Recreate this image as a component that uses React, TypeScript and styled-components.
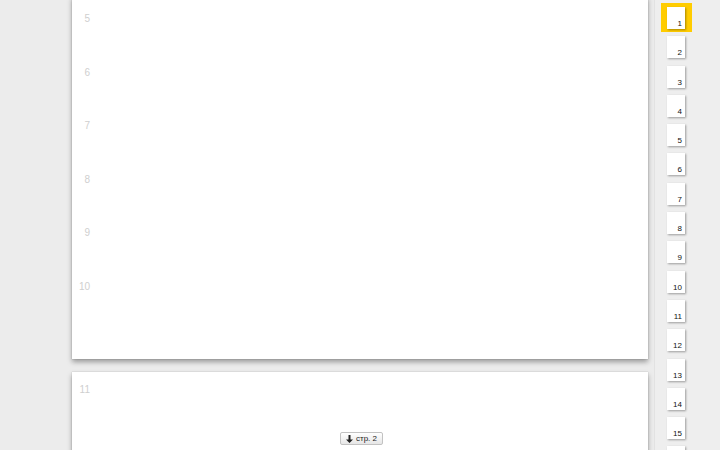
import * as React from "react"
import styled, { createGlobalStyle } from "styled-components"

const GlobalStyle = createGlobalStyle`
  html, body {
    margin: 0;
    padding: 0;
    overflow: hidden;
    background: #ececec;
    font-family: "Liberation Sans", Arial, sans-serif;
  }
`

const Viewport = styled.div`
  display: flex;
  width: 720px;
  height: 450px;
  overflow: hidden;
`

const Main = styled.div`
  position: relative;
  width: 654px;
  height: 450px;
  overflow: hidden;
  background: #ececec;
`

const PageColumn = styled.div`
  display: flex;
  flex-direction: column;
  gap: 13px;
  width: 576px;
  margin-left: 72px;
`

const Page = styled.div<{ offset: number; pageHeight: number; padTop: number }>`
  margin-top: ${({ offset }) => offset}px;
  height: ${({ pageHeight }) => pageHeight}px;
  padding-top: ${({ padTop }) => padTop}px;
  background: #fff;
  box-shadow: 0 0 1px rgba(0, 0, 0, 0.25), 0 3px 5px rgba(0, 0, 0, 0.35);
  box-sizing: border-box;
  flex-shrink: 0;
`

const LineRow = styled.div`
  height: 53.6px;
  display: flex;
`

const LineNumber = styled.span`
  width: 18px;
  text-align: right;
  font-size: 10px;
  line-height: 12px;
  color: #cfcfcf;
`

const Float = styled.div`
  position: absolute;
  left: 72px;
  width: 576px;
  bottom: 5px;
  display: flex;
  justify-content: center;
`

const PageButton = styled.button`
  display: flex;
  align-items: center;
  gap: 3px;
  height: 13px;
  padding: 0 5px 0 5px;
  margin: 0 0 0 3px;
  border: 1px solid #c2c2c2;
  border-radius: 2px;
  background: linear-gradient(#ffffff, #e6e6e6);
  font-family: "Liberation Sans", Arial, sans-serif;
  font-size: 8px;
  line-height: 9px;
  color: #222;
  cursor: pointer;
`

const Sidebar = styled.div`
  width: 66px;
  height: 450px;
  box-sizing: border-box;
  border-left: 1px solid #e2e2e2;
  background: #eeeeee;
  padding: 3px 0 0 6px;
  display: flex;
  flex-direction: column;
`

const ThumbItem = styled.div<{ active?: boolean }>`
  width: 31px;
  height: 29.3px;
  flex-shrink: 0;
  box-sizing: border-box;
  padding: 4px 0 0 6px;
  background: ${({ active }) => (active ? "#ffcc00" : "transparent")};
`

const Thumb = styled.div`
  width: 18px;
  height: 22px;
  background: #fff;
  box-shadow: 0.5px 0.5px 2px rgba(0, 0, 0, 0.35);
  display: flex;
  align-items: flex-end;
  justify-content: flex-end;
  box-sizing: border-box;
  padding: 0 3px 1px 0;
  font-size: 8px;
  line-height: 9px;
  color: #111;
`

const ArrowDown = () => (
  <svg width="7" height="8" viewBox="0 0 7 8">
    <path d="M2.5 0h2v4.5H7L3.5 8 0 4.5h2.5z" fill="#222" />
  </svg>
)

const lines = (from: number, to: number) =>
  Array.from({ length: to - from + 1 }, (_, i) => from + i)

const App = () => {
  return (
    <Viewport>
      <GlobalStyle />
      <Main>
        <PageColumn>
          <Page offset={-4} pageHeight={363} padTop={17}>
            {lines(5, 10).map(n => (
              <LineRow key={n}>
                <LineNumber>{n}</LineNumber>
              </LineRow>
            ))}
          </Page>
          <Page offset={0} pageHeight={200} padTop={12}>
            <LineRow>
              <LineNumber>11</LineNumber>
            </LineRow>
          </Page>
        </PageColumn>
        <Float>
          <PageButton>
            <ArrowDown />
            стр. 2
          </PageButton>
        </Float>
      </Main>
      <Sidebar>
        {lines(1, 16).map(n => (
          <ThumbItem key={n} active={n === 1}>
            <Thumb>{n < 16 ? n : null}</Thumb>
          </ThumbItem>
        ))}
      </Sidebar>
    </Viewport>
  )
}

export default App
